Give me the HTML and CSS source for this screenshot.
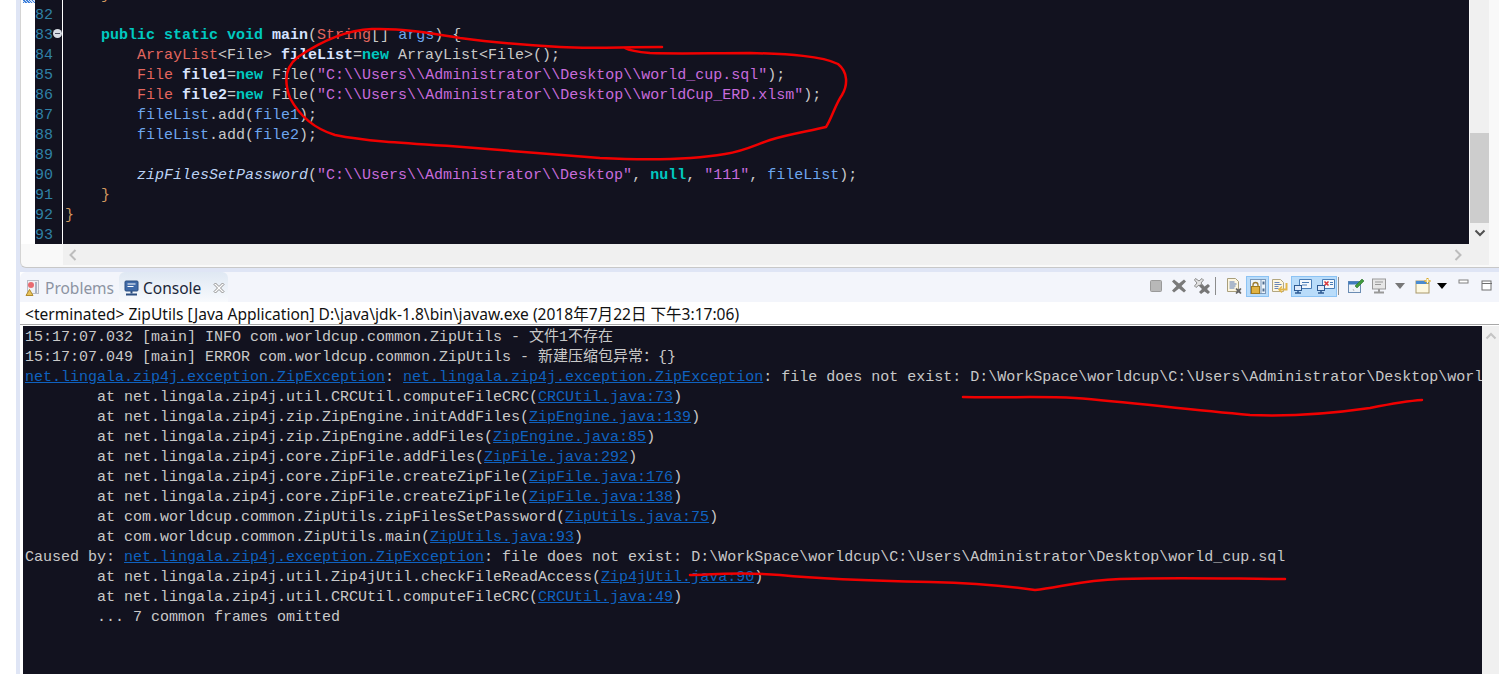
FILE: index.html
```html
<!DOCTYPE html>
<html lang="en">
<head>
<meta charset="utf-8">
<title>ZipUtils console</title>
<link rel="stylesheet" href="styles.css">
</head>
<body>
<div class="workbench">
  <section class="editor-pane">
    <div class="editor-main">
      <div class="ruler"><div class="ruler-mark"></div></div>
      <div class="gutter"><div class="lines"><div class="ln"></div><div class="ln">82</div><div class="ln">83<span class="fold"></span></div><div class="ln">84</div><div class="ln">85</div><div class="ln">86</div><div class="ln">87</div><div class="ln">88</div><div class="ln">89</div><div class="ln">90</div><div class="ln">91</div><div class="ln">92</div><div class="ln">93</div></div></div>
      <div class="code"><div class="lines"><div class="cl">    <span class="p">}</span></div><div class="cl"> </div><div class="cl">    <span class="k">public static void</span> <span class="m">main</span>(<span class="t">String</span>[] <span class="v">args</span>) {</div><div class="cl">        <span class="t">ArrayList</span>&lt;File&gt; <span class="f">fileList</span>=<span class="k">new</span> ArrayList&lt;File&gt;();</div><div class="cl">        <span class="t">File</span> <span class="f">file1</span>=<span class="k">new</span> File(<span class="s">"C:\\Users\\Administrator\\Desktop\\world_cup.sql"</span>);</div><div class="cl">        <span class="t">File</span> <span class="f">file2</span>=<span class="k">new</span> File(<span class="s">"C:\\Users\\Administrator\\Desktop\\worldCup_ERD.xlsm"</span>);</div><div class="cl">        <span class="v">fileList</span>.add(<span class="v">file1</span>);</div><div class="cl">        <span class="v">fileList</span>.add(<span class="v">file2</span>);</div><div class="cl"> </div><div class="cl">        <em class="i">zipFilesSetPassword</em>(<span class="s">"C:\\Users\\Administrator\\Desktop"</span>, <span class="k">null</span>, <span class="s">"111"</span>, <span class="v">fileList</span>);</div><div class="cl">    <span class="p">}</span></div><div class="cl"><span class="p">}</span></div><div class="cl"> </div></div></div>
      <div class="vscroll">
        <div class="vthumb"></div>
        <svg class="chev" width="12" height="8" viewBox="0 0 12 8"><path d="M1.5 1.5 6 6l4.500-4.500" fill="none" stroke="#505050" stroke-width="2"/></svg>
      </div>
    </div>
    <div class="hscroll-row">
      <div class="hscroll">
        <svg width="8" height="12" viewBox="0 0 8 12"><path d="M6.500 1 1.500 6l5 5" fill="none" stroke="#bdbdbd" stroke-width="2"/></svg>
        <svg width="8" height="12" viewBox="0 0 8 12"><path d="M1.500 1l5 5-5 5" fill="none" stroke="#bdbdbd" stroke-width="2"/></svg>
      </div>
    </div>
  </section>

  <section class="view">
    <header class="view-head">
      <div class="tabs">
        <div class="tab">
          <svg width="16" height="18" viewBox="0 0 16 18"><rect x="2.500" y="1.500" width="11" height="13" fill="#f0f0f4" stroke="#b9bcc6"/><circle cx="6" cy="6" r="3" fill="#e86a70"/><path d="M11 3v11" stroke="#aab2c2" stroke-width="2"/><path d="M4.500 10.500l3.500 6H1z" fill="#e8c35c" stroke="#b08a2c"/></svg>
          <span>Problems</span>
        </div>
        <div class="tab tab-active">
          <svg width="15" height="16" viewBox="0 0 15 16"><rect x="1" y="1" width="13" height="10" rx="1" fill="#3f6aa8" stroke="#2c4e80"/><path d="M3.500 4h8M3.500 6.500h6" stroke="#fff"/><path d="M7.500 11v2.500" stroke="#2c4e80" stroke-width="2"/><path d="M2 14.500h11" stroke="#2c4e80" stroke-width="2"/></svg>
          <span>Console</span>
          <svg class="tab-close" width="12" height="12" viewBox="0 0 12 12"><path d="M1 2.500 2.500 1 6 4.500 9.500 1 11 2.500 7.500 6 11 9.500 9.500 11 6 7.500 2.500 11 1 9.500 4.500 6z" fill="#fff" stroke="#8d8d8d"/></svg>
        </div>
      </div>
      <div class="toolbar">
        <svg class="ic" width="16" height="16" viewBox="0 0 16 16"><rect x="2.500" y="2.500" width="11" height="11" rx="1" fill="#b8b8b8" stroke="#9a9a9a"/></svg>
        <svg class="ic" width="16" height="16" viewBox="0 0 16 16"><path d="M3 1.500 8 5.500l5-4 2 2-4.500 4.500 4.500 4.500-2 2-5-4-5 4-2-2L5.500 8 1 3.500z" fill="#7a7a7a"/></svg>
        <svg class="ic ic-rem" width="18" height="16" viewBox="0 0 18 16"><path d="M2.500 0.500 6 3l3-2.500 1.500 1.500L8 5l2.500 3L9 9.500 6 7 3 9.500 1.500 8 4 5 1.500 2z" fill="#e4e4e4" stroke="#8a8a8a"/><path d="M8 6l3.500 2.500L15 6l2 2-3 3 3 3-2 2-3.500-2.500L8 16l-2-2 3-3-3-3z" fill="#777"/></svg>
        <i class="sep"></i>
        <svg class="ic ic-doc" width="18" height="16" viewBox="0 0 18 16"><path d="M2.500 0.500h8l3 3v10h-11z" fill="#fdf6e0" stroke="#a99f7c"/><path d="M4.500 4h5M4.500 6h7M4.500 8h6M4.500 10h5" stroke="#5b7bb4"/><path d="M11.500 10l2 1.500 2-1.500 1 1-1.500 2 1.500 2-1 1-2-1.500-2 1.500-1-1 1.500-2-1.500-2z" fill="#666"/></svg>
        <span class="toggle toggle-one">
          <svg width="18" height="17" viewBox="0 0 18 17"><rect x="1.500" y="1.500" width="15" height="14" fill="#eef4fa" stroke="#7a97b8"/><path d="M12 1.500v14" stroke="#7a97b8"/><rect x="13.500" y="3.500" width="2" height="3" fill="#4f6c8f"/><rect x="13.500" y="10.500" width="2" height="3" fill="#4f6c8f"/><path d="M4 8.500V7a2.500 2.500 0 0 1 5 0v1.500" fill="none" stroke="#9b7a2e" stroke-width="1.300"/><rect x="2.500" y="8.500" width="8" height="7" fill="#e0b243" stroke="#a17a1c"/></svg>
        </span>
        <svg class="ic ic-wrap" width="18" height="16" viewBox="0 0 18 16"><path d="M1.500 1.500h8l3 3v9h-11z" fill="#fdf6e0" stroke="#b3a780"/><path d="M3.500 4.500h5M3.500 6.500h7M3.500 8.500h4M3.500 10.500h4" stroke="#6985b8"/><path d="M15.500 5v6.500H9" fill="none" stroke="#e2b64a" stroke-width="2"/><path d="M11 8.500 8 11.500l3 3" fill="none" stroke="#e2b64a" stroke-width="1.500"/></svg>
        <span class="toggle toggle-two">
          <svg width="20" height="17" viewBox="0 0 20 17"><path d="M6.500 1.500h12v9h-12z" fill="#f4f8fd" stroke="#4a7db6"/><path d="M9 4.500h7M9 7h5" stroke="#4a7db6"/><rect x="1.500" y="7.500" width="7" height="5" fill="#dfeafa" stroke="#2e5a92"/><path d="M5 12.500v2M2 15h6" stroke="#2e5a92" stroke-width="1.500"/></svg>
          <svg width="20" height="17" viewBox="0 0 20 17"><path d="M6.500 1.500h12v9h-12z" fill="#f4f8fd" stroke="#4a7db6"/><path d="M8.500 3.500l4 4M12.500 3.500l-4 4" stroke="#d8383c" stroke-width="1.600"/><path d="M14 4.500h3M14 6.500h3" stroke="#4a7db6"/><rect x="1.500" y="7.500" width="7" height="5" fill="#dfeafa" stroke="#2e5a92"/><path d="M5 12.500v2M2 15h6" stroke="#2e5a92" stroke-width="1.500"/></svg>
        </span>
        <i class="sep sep-2"></i>
        <svg class="ic ic-pin" width="18" height="16" viewBox="0 0 18 16"><rect x="1.500" y="3.500" width="12" height="11" fill="#eef3f9" stroke="#6a8cb3"/><rect x="1.500" y="3.500" width="12" height="3" fill="#3f7bbf"/><path d="M8 8l4-4 3-3 2 2-3 3-4 4z" fill="#3f9a3c" stroke="#2c6f2b" stroke-width=".6"/><path d="M7 13l-1-2" stroke="#bbb"/></svg>
        <svg class="ic ic-disp" width="16" height="16" viewBox="0 0 16 16"><rect x="1.500" y="1" width="13" height="10" fill="#e6e6e6" stroke="#999"/><path d="M4 4h8M4 6.500h6" stroke="#999"/><path d="M8 11v2.500M3 14.500h10" stroke="#999" stroke-width="2"/></svg>
        <i class="drop drop-gray"></i>
        <svg class="ic ic-new" width="16" height="16" viewBox="0 0 16 16"><rect x="1" y="3" width="13" height="12" fill="#fdf8e0" stroke="#a8986a"/><rect x="1" y="3" width="13" height="3" fill="#4a8bd0"/><path d="M12.500 0v6M9.500 3h6" stroke="#d9a928" stroke-width="2"/><path d="M12.500 1v4M10.500 3h4" stroke="#fff7d4"/></svg>
        <i class="drop drop-black"></i>
        <svg class="ic ic-min" width="12" height="6" viewBox="0 0 12 6"><rect x=".5" y=".5" width="9" height="3" transform="translate(.5 .5)" fill="#fff" stroke="#808080"/></svg>
        <svg class="ic ic-max" width="12" height="12" viewBox="0 0 12 12"><rect x=".5" y=".5" width="9" height="9" transform="translate(.5 .5)" fill="#fff" stroke="#707070"/><path d="M1 3.500h10" stroke="#707070"/></svg>
      </div>
    </header>
    <div class="subtitle">&lt;terminated&gt; ZipUtils [Java Application] D:\java\jdk-1.8\bin\javaw.exe (2018年7月22日 下午3:17:06)</div>
    <div class="console-wrap">
      <div class="console"><div>15:17:07.032 [main] INFO com.worldcup.common.ZipUtils - 文件1不存在</div><div>15:17:07.049 [main] ERROR com.worldcup.common.ZipUtils - 新建压缩包异常：{}</div><div><a>net.lingala.zip4j.exception.ZipException</a>: <a>net.lingala.zip4j.exception.ZipException</a>: file does not exist: D:\WorkSpace\worldcup\C:\Users\Administrator\Desktop\world_cup.sql</div><div>	at net.lingala.zip4j.util.CRCUtil.computeFileCRC(<a>CRCUtil.java:73</a>)</div><div>	at net.lingala.zip4j.zip.ZipEngine.initAddFiles(<a>ZipEngine.java:139</a>)</div><div>	at net.lingala.zip4j.zip.ZipEngine.addFiles(<a>ZipEngine.java:85</a>)</div><div>	at net.lingala.zip4j.core.ZipFile.addFiles(<a>ZipFile.java:292</a>)</div><div>	at net.lingala.zip4j.core.ZipFile.createZipFile(<a>ZipFile.java:176</a>)</div><div>	at net.lingala.zip4j.core.ZipFile.createZipFile(<a>ZipFile.java:138</a>)</div><div>	at com.worldcup.common.ZipUtils.zipFilesSetPassword(<a>ZipUtils.java:75</a>)</div><div>	at com.worldcup.common.ZipUtils.main(<a>ZipUtils.java:93</a>)</div><div>Caused by: <a>net.lingala.zip4j.exception.ZipException</a>: file does not exist: D:\WorkSpace\worldcup\C:\Users\Administrator\Desktop\world_cup.sql</div><div>	at net.lingala.zip4j.util.Zip4jUtil.checkFileReadAccess(<a>Zip4jUtil.java:90</a>)</div><div>	at net.lingala.zip4j.util.CRCUtil.computeFileCRC(<a>CRCUtil.java:49</a>)</div><div>	... 7 common frames omitted</div></div>
      <div class="console-scroll"><svg width="12" height="8" viewBox="0 0 12 8"><path d="M1.500 6.500 6 2l4.500 4.500" fill="none" stroke="#c4c4c4" stroke-width="2"/></svg></div>
    </div>
  </section>
</div>
<svg class="ink" width="1499" height="674" viewBox="0 0 1499 674" aria-hidden="true">
  <path d="M662 47C620 47 590 49 560 47C525 45 490 42 460 38C430 33 400 28 372 29C345 30 320 42 298 57C285 67 284 82 290 98C298 113 312 128 335 135C365 141 400 143 450 146C500 150 550 154 600 158C640 160 690 160 725 154C745 151 755 145 770 140C790 134 810 131 826 127C832 118 835 105 842 95C848 85 848 72 838 64C822 56 790 54 750 53C710 53 680 54 650 53C638 52 630 51 625 48"/>
  <path d="M963 397C1000 398 1040 396 1075 398C1130 402 1180 409 1250 415C1295 417 1335 413 1370 408C1390 404 1405 401 1422 400"/>
  <path d="M690 575C720 574 745 572 780 575C830 580 880 581 930 582C970 583 1000 585 1035 590C1060 587 1085 580 1120 579C1180 577 1240 579 1285 579"/>
</svg>
</body>
</html>
```
FILE: styles.css
```css
* { box-sizing: border-box; }
html, body { margin: 0; height: 674px; overflow: hidden; background: #fff; }
.workbench {
  margin-left: 16px;
  height: 674px;
  padding-left: 4px;
  background: #dfe5f5;
  display: flex;
  flex-direction: column;
  font-family: "Noto Sans", "Noto Sans CJK SC", sans-serif;
}
.editor-pane {
  height: 268px;
  margin-bottom: 4px;
  background: #f9f9f9;
  border-left: 1px solid #d4d4d4;
  border-bottom: 1px solid #c8c8c8;
  border-bottom-left-radius: 6px;
  flex: none;
  display: flex;
  flex-direction: column;
}
.editor-main { height: 244px; display: flex; flex: none; overflow: hidden; padding-right: 10px; }
.ruler { width: 14px; flex: none; background: #fff; position: relative; }
.ruler-mark {
  height: 3px;
  width: 12px;
  margin-left: 2px;
  background: repeating-linear-gradient(45deg, #3d7fd9 0 1px, #cfe0f8 1px 2px);
}
.gutter {
  width: 28px;
  flex: none;
  background: #12121f;
  border-right: 1px solid #fff;
  color: #2f81a6;
  overflow: hidden;
}
.lines { margin-top: -14px; }
.ln, .cl, .console div {
  height: 20px;
  line-height: 20px;
  white-space: pre;
  font: 15px/20px "Liberation Mono", "Noto Sans CJK SC", monospace;
}
.ln { position: relative; }
.fold {
  position: absolute;
  left: 18px;
  top: 3px;
  width: 9px;
  height: 9px;
  border-radius: 50%;
  background: #d8dde4;
}
.fold::after {
  content: "";
  position: absolute;
  left: 2px;
  top: 4px;
  width: 5px;
  height: 1px;
  background: #4a5060;
}
.code {
  flex: 1;
  min-width: 0;
  padding-left: 2px;
  background: #12121f;
  color: #c9c9c9;
  overflow: hidden;
}
.k { color: #00c8c0; font-weight: 700; }
.m { color: #d4e2ff; font-weight: 700; }
.t { color: #e3665e; }
.v { color: #6ea6ee; }
.f { color: #d8e4ff; font-weight: 700; }
.s { color: #c76cdc; }
.i { color: #bcd2f4; font-style: italic; }
.p { color: #d29a60; }
.vscroll {
  width: 19px;
  margin-left: 1px;
  flex: none;
  background: #f0f0f0;
  display: flex;
  flex-direction: column;
  align-items: center;
  padding-top: 133px;
}
.vthumb { width: 100%; height: 90px; background: #cdcdcd; flex: none; }
.chev { margin-top: 6px; flex: none; }
.hscroll-row { flex: 1; padding: 0 10px 2px 42px; }
.hscroll {
  height: 21px;
  background: #f0f0f0;
  display: flex;
  align-items: center;
  justify-content: space-between;
  padding: 0 27px 0 6px;
}
.view { flex: 1; min-height: 0; display: flex; flex-direction: column; background: #fff; }
.view-head {
  height: 30px;
  flex: none;
  background: #f3f5fb;
  display: flex;
  align-items: stretch;
  justify-content: space-between;
  border-top-left-radius: 6px;
}
.tabs { display: flex; }
.tab {
  display: flex;
  align-items: center;
  gap: 4px;
  width: 99px;
  padding: 2px 0 0 5px;
  font-size: 15.500px;
  color: #8c93a2;
}
.tab-active {
  width: 109px;
  padding-left: 5px;
  color: #1c2738;
  background: linear-gradient(#dfe8f3, #f8fafd);
  border-radius: 6px 6px 0 0;
}
.tab-close { margin-left: 8px; }
.toolbar { display: flex; align-items: center; padding-bottom: 2px; }
.ic { flex: none; display: block; margin-left: 7px; }
.ic-rem { margin-left: 6px; }
.sep { width: 1px; height: 18px; background: #8c8c8c; margin: 0 9px 0 4px; flex: none; }
.sep-2 { margin: 0 8px 0 1px; }
.ic-doc { margin-left: 0; }
.ic-wrap { margin-left: 2px; }
.toggle {
  display: flex;
  align-items: center;
  justify-content: center;
  height: 21px;
  background: #b9dcfa;
  border: 1px solid #8cc3f4;
  flex: none;
}
.toggle-one { width: 23px; margin-left: 3px; }
.toggle-two { width: 46px; margin-left: 2px; gap: 3px; }
.ic-pin { margin-left: 0; }
.ic-disp { margin-left: 6px; }
.drop {
  width: 0;
  height: 0;
  border-left: 5px solid transparent;
  border-right: 5px solid transparent;
  border-top: 6px solid #000;
  flex: none;
}
.drop-gray { border-top-color: #777; margin-left: 8px; }
.drop-black { margin-left: 6px; }
.ic-new { margin-left: 10px; }
.ic-min { margin-left: 11px; margin-bottom: 8px; }
.ic-max { margin-left: 11px; margin-right: 6px; }
.subtitle {
  height: 22px;
  line-height: 24px;
  padding-left: 5px;
  flex: none;
  font-size: 15.560px;
  color: #111;
  white-space: nowrap;
  overflow: hidden;
}
.console-wrap {
  flex: 1;
  min-height: 0;
  display: flex;
  border-top: 1px solid #a8a8a8;
  padding-top: 1px;
  padding-left: 3px;
}
.console {
  flex: 1;
  min-width: 0;
  background: #12121f;
  color: #c9c9c9;
  padding: 2px 0 0 2px;
  overflow: hidden;
  tab-size: 8;
}
.console a { color: #0f62c0; text-decoration: underline; }
.console-scroll {
  width: 17px;
  flex: none;
  background: #f0f0f0;
  text-align: center;
  line-height: 0;
  padding-top: 6px;
}
.ink {
  position: absolute;
  left: 0;
  top: 0;
  pointer-events: none;
  fill: none;
  stroke: #f00000;
  stroke-width: 2.500;
  stroke-linecap: round;
}
```
